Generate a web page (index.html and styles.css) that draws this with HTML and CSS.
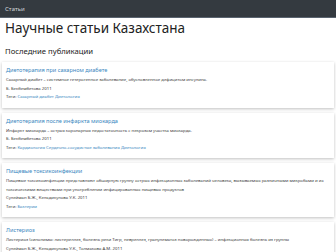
FILE: index.html
```html
<!DOCTYPE html>
<html lang="ru">
<head>
    <meta charset="UTF-8">
    <meta name="viewport" content="width=device-width, initial-scale=1.0">
    <title>Научные статьи Казахстана</title>
    <link rel="stylesheet" href="styles.css">
</head>
<body>
    <nav class="navbar">
        <a href="#" class="nav-link">Статьи</a>
    </nav>
    <div class="container">
        <h1>Научные статьи Казахстана</h1>
        <h2>Последние публикации</h2>

        <div class="card">
            <a href="#" class="card-title">Диетотерапия при сахарном диабете</a>
            <p class="card-text">Сахарный диабет – системное гетерогенное заболевание, обусловленное дефицитом инсулина.</p>
            <p class="card-text">Б. Бекбембетова 2011</p>
            <p class="card-text">Теги: <a href="#">Сахарный диабет</a> <a href="#">Диетология</a></p>
        </div>

        <div class="card">
            <a href="#" class="card-title">Диетотерапия после инфаркта миокарда</a>
            <p class="card-text">Инфаркт миокарда – острая коронарная недостаточность с некрозом участка миокарда.</p>
            <p class="card-text">Б. Бекбембетова 2011</p>
            <p class="card-text">Теги: <a href="#">Кардиология</a> <a href="#">Сердечно-сосудистые заболевания</a> <a href="#">Диетология</a></p>
        </div>

        <div class="card">
            <a href="#" class="card-title">Пищевые токсикоинфекции</a>
            <p class="card-text">Пищевые токсикоинфекции представляют обширную группу острых инфекционных заболеваний человека, вызываемых различными микробами и их токсическими веществами при употреблении инфицированных пищевых продуктов</p>
            <p class="card-text">Сулейман Б.Ж., Кельдикулова У.К. 2011</p>
            <p class="card-text">Теги: <a href="#">Бактерии</a></p>
        </div>

        <div class="card">
            <a href="#" class="card-title">Листериоз</a>
            <p class="card-text">Листериоз (синонимы: листереллез, болезнь реки Тигр, невреллез, гранулематоз новорожденных) – инфекционная болезнь из группы</p>
            <p class="card-text">Сулейман Б.Ж., Кельдикулова У.К., Толмакова А.М. 2011</p>
            <p class="card-text">Теги: <a href="#">Бактерии</a></p>
        </div>
    </div>
</body>
</html>
```

FILE: styles.css
```css
body {
    font-family: "Noto Sans", sans-serif;
    margin: 0;
    padding: 0;
    background-color: #fff;
    color: #333;
}
a {
    color: #3a87c0;
    text-decoration: none;
}
.navbar {
    height: 17px;
    display: flex;
    align-items: center;
    padding: 0 5px;
    background-color: #343a40;
    border-bottom: 1px solid #5a6470;
}
.nav-link {
    color: #cfd3d8;
    font-size: 6px;
}
.container {
    padding: 0 2px;
}
h1 {
    font-size: 13.5px;
    font-weight: normal;
    color: #222;
    margin: 0;
    padding: 1px 3px 0;
    line-height: 18px;
}
h2 {
    font-size: 7.7px;
    font-weight: normal;
    color: #222;
    margin: 0;
    padding: 9px 3px 3px;
    line-height: 11px;
}
.card {
    margin: 2px 0 5px;
    padding: 3px 4px 7px;
    background-color: #fff;
    box-shadow: 0 1px 3px rgba(0,0,0,0.25);
}
.card-title {
    display: block;
    font-size: 5.6px;
    line-height: 10px;
}
.card-text {
    margin: 0;
    font-size: 4.3px;
    line-height: 8.5px;
    color: #3a3a3a;
}
```
